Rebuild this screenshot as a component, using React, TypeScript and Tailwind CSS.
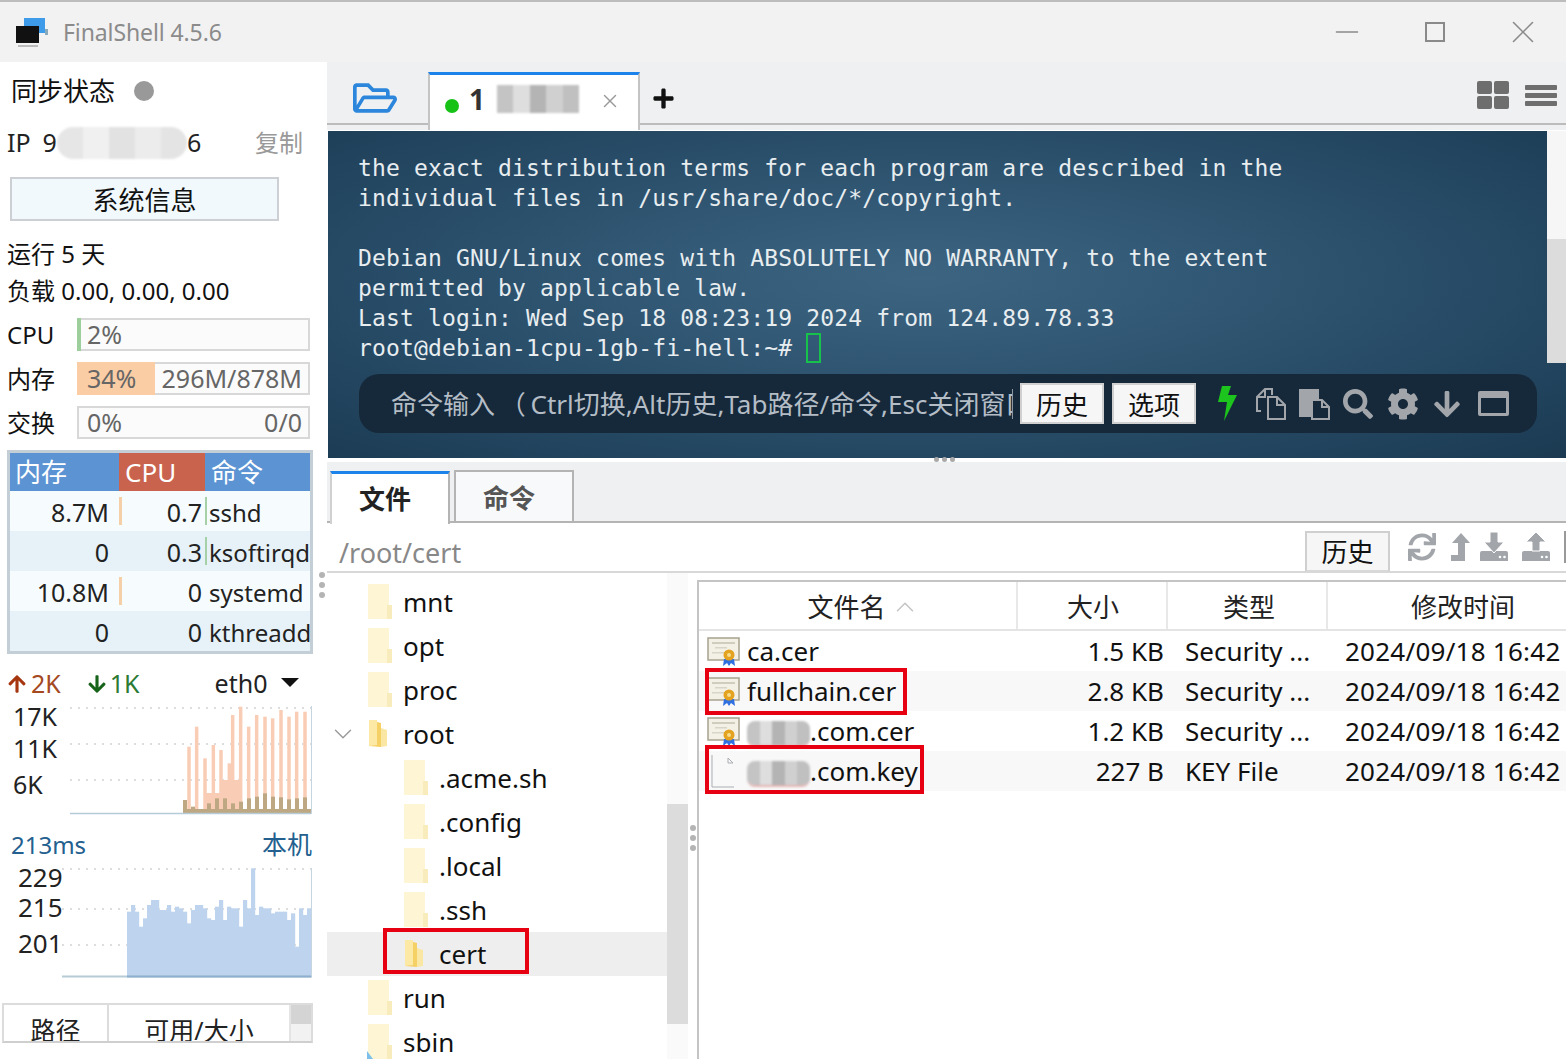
import React from 'react';
import { X, Minus, ChevronUp, ChevronDown } from 'lucide-react';
import { FaArrowDown, FaArrowUp, FaCog, FaPlus, FaRegFolderOpen, FaSearch, FaSync } from 'react-icons/fa';

const sans = { fontFamily: '"Noto Sans", "Noto Sans CJK SC", sans-serif' };

const netUp: [number, number][] = [[567, 260], [590, 200], [615, 295], [640, 255], [663, 270], [688, 310], [698, 165], [722, 140], [746, 200], [770, 165], [795, 170], [818, 175], [843, 150], [867, 170], [890, 155], [915, 155]];
const netDown = [420, 440, 460, 430, 415, 415, 430, 425, 415, 410, 400, 410, 412, 418, 415, 412];
const pingTops = [755, 735, 755, 800, 775, 735, 720, 720, 750, 750, 735, 755, 740, 745, 755, 790, 750, 735, 735, 745, 775, 780, 740, 720, 780, 740, 745, 745, 800, 720, 745, 625, 765, 740, 745, 745, 760, 755, 755, 755, 780, 760, 860, 745, 765, 745];

function Blur({ className, light = false, pink = false }: { className: string; light?: boolean; pink?: boolean }) {
  return (
    <span className={`inline-block overflow-hidden blur-[1px] ${pink ? 'border-b-2 border-[#e6b4b4]' : ''} ${className}`}>
      <span className="flex h-full w-full">
        <span className={`flex-1 ${light ? 'bg-[#e6e6e6]' : 'bg-[#c4c4c4]'}`} />
        <span className={`flex-1 ${light ? 'bg-[#f0f0f0]' : 'bg-[#dedede]'}`} />
        <span className={`flex-1 ${light ? 'bg-[#e2e2e2]' : 'bg-[#b4b4b4]'}`} />
        <span className={`flex-1 ${light ? 'bg-[#ececec]' : 'bg-[#d0d0d0]'}`} />
        <span className={`flex-1 ${light ? 'bg-[#e4e4e4]' : 'bg-[#c0c0c0]'}`} />
      </span>
    </span>
  );
}

function Folder({ open = false, small = false }: { open?: boolean; small?: boolean }) {
  if (open) {
    return (
      <svg width="26" height="32" viewBox="0 0 26 32" className="shrink-0">
        <path d="M2 2 L14 5 L14 29 L2 28 Z" fill="#f5d064" />
        <path d="M14 10 L20 12 L20 28 L14 29 Z" fill="#fbe7a4" />
        <path d="M2 2 L10 2 L10 27 L2 28 Z" fill="#fce9a6" />
      </svg>
    );
  }
  return (
    <svg width="26" height="38" viewBox="0 0 26 38" className="shrink-0">
      <path d="M1 1 H22 V36 H1 Z" fill="#fdf5d3" />
      <path d="M20 22 H25 V36 H20 Z" fill="#f9ecbc" />
      {small && <path d="M0 28 L6 36 L0 36 Z" fill="#7cc0ea" />}
    </svg>
  );
}

function CertIcon() {
  return (
    <svg width="34" height="30" viewBox="0 0 34 30" className="shrink-0">
      <rect x="1" y="2" width="31" height="22" fill="#f3f0e6" stroke="#a8a28e" strokeWidth="1.5" />
      <rect x="5" y="6" width="23" height="2" fill="#d0ccbe" />
      <rect x="8" y="11" width="12" height="1.5" fill="#d8d4c8" />
      <rect x="5" y="16" width="14" height="1.5" fill="#d8d4c8" />
      <path d="M17 23 L16 30 L20 27 L22 30 L24 27 L28 30 L27 23 Z" fill="#2f6fe0" />
      <circle cx="22" cy="19" r="5.5" fill="#e3a21f" />
      <circle cx="22" cy="19" r="2" fill="#f7dc8a" />
    </svg>
  );
}

function FileIcon() {
  return (
    <svg width="34" height="36" viewBox="0 0 34 36" className="shrink-0">
      <path d="M5 2 V34 H27" fill="none" stroke="#a9adb2" strokeWidth="1" />
      <path d="M21 5 L26 10 H21 Z" fill="none" stroke="#a9adb2" strokeWidth="1" />
    </svg>
  );
}

function MeterRow({ label, fill, fillClass, left, right }: { label: string; fill: string; fillClass: string; left: string; right?: string }) {
  return (
    <div className="flex items-center h-[33px] mb-[11px]">
      <span className="w-[70px] text-[24px] text-[#111]">{label}</span>
      <div className="relative flex-1 h-full mr-[17px] bg-[#fbfbfb] border-2 border-[#d8d8d8] text-[#666] text-[25px] leading-[29px]">
        <div className={`absolute -left-[2px] -top-[2px] -bottom-[2px] ${fill} ${fillClass}`} />
        <div className="relative flex justify-between pl-2 pr-1.5">
          <span>{left}</span>
          {right && <span>{right}</span>}
        </div>
      </div>
    </div>
  );
}

function ProcRow({ mem, cpu, cmd, alt, memBar, cpuBar }: { mem: string; cpu: string; cmd: string; alt: boolean; memBar: boolean; cpuBar: boolean }) {
  return (
    <div className={`flex h-10 items-center text-[25px] text-[#222] whitespace-nowrap overflow-hidden ${alt ? 'bg-[#e6f2f8]' : 'bg-[#f6fcfe]'}`}>
      <span className="w-[99px] text-right shrink-0 pt-[4px]">{mem}</span>
      <span className={`w-[3px] h-[28px] ml-[10px] shrink-0 ${memBar ? 'bg-[#f5cfa8]' : ''}`} />
      <span className="w-[80px] text-right shrink-0 pt-[4px]">{cpu}</span>
      <span className={`w-[2px] h-[28px] ml-[3px] shrink-0 ${cpuBar ? 'bg-[#a6d1a6]' : ''}`} />
      <span className="ml-[2px] text-[24px] pt-[4px]">{cmd}</span>
    </div>
  );
}

function Sidebar() {
  return (
    <aside className="relative w-[327px] shrink-0 bg-white h-full overflow-hidden">
      <div className="flex items-center h-[58px] pl-[11px]">
        <span className="text-[26px] text-[#111]">同步状态</span>
        <span className="w-[20px] h-[20px] rounded-full bg-[#999] ml-[19px]" />
      </div>
      <div className="flex items-center h-[46px] pl-[7px] pr-[24px] text-[25px] text-[#222]">
        <span>IP</span>
        <span className="ml-[12px]">9</span>
        <Blur light className="w-[130px] h-[32px] rounded-full" />
        <span>6</span>
        <span className="ml-auto text-[#999] text-[24px]">复制</span>
      </div>
      <div className="mt-[11px] ml-[10px] w-[269px] h-[44px] flex items-center justify-center bg-[#f2f9fd] border-2 border-[#ccd0d4] text-[26px] text-[#111] pt-[2px]">系统信息</div>
      <div className="pl-[7px] mt-[14px] h-[38px] flex items-center text-[24px] text-[#111]">运行 5 天</div>
      <div className="pl-[7px] h-[36px] flex items-center text-[24px] text-[#111] whitespace-nowrap">负载 0.00, 0.00, 0.00</div>
      <div className="pl-[7px] mt-[9px]">
        <MeterRow label="CPU" fill="w-[4px]" fillClass="bg-[#9ccf9c]" left="2%" />
        <MeterRow label="内存" fill="w-[78px]" fillClass="bg-[#fbcda4]" left="34%" right="296M/878M" />
        <MeterRow label="交换" fill="w-0" fillClass="" left="0%" right="0/0" />
      </div>

      <div className="ml-[7px] w-[306px] border-[3px] border-[#c3ced6] h-[204px] overflow-hidden">
        <div className="flex h-[38px] text-[26px] text-white bg-[#5b93d3] leading-[38px]">
          <span className="w-[109px] pl-[5px]">内存</span>
          <span className="w-[86px] pl-[6px] bg-[#c9634e]">CPU</span>
          <span className="pl-[6px]">命令</span>
        </div>
        <ProcRow mem="8.7M" cpu="0.7" cmd="sshd" alt={false} memBar cpuBar />
        <ProcRow mem="0" cpu="0.3" cmd="ksoftirqd" alt memBar={false} cpuBar />
        <ProcRow mem="10.8M" cpu="0" cmd="systemd" alt={false} memBar cpuBar={false} />
        <ProcRow mem="0" cpu="0" cmd="kthreadd" alt memBar={false} cpuBar={false} />
      </div>

      <div className="flex items-center h-[36px] mt-[12px] pl-[7px] text-[25px]">
        <FaArrowUp size={20} className="text-[#a5360f]" />
        <span className="text-[#a5491f] ml-[4px]">2K</span>
        <FaArrowDown size={20} className="text-[#17631a] ml-[26px]" />
        <span className="text-[#2b7a35] ml-[3px]">1K</span>
        <span className="text-[#222] ml-[75px]">eth0</span>
        <span className="ml-[14px] w-0 h-0 border-x-[9px] border-x-transparent border-t-[9px] border-t-[#111] mb-1" />
      </div>
      <div className="flex h-[110px] mt-[3px]">
        <div className="w-[70px] pl-[13px] text-[25px] text-[#222] leading-[32px] -mt-[5px]">
          <div>17K</div>
          <div>11K</div>
          <div className="mt-[4px]">6K</div>
        </div>
        <svg width="243" height="110" viewBox="70 705 243 110">
          <path d="M70 708 H312 M70 744 H312 M70 780 H312" stroke="#bbb" strokeWidth="1" strokeDasharray="2 6" />
          <rect x="205" y="793" width="35" height="20" fill="#f9cdb5" />
          <rect x="221" y="780" width="19" height="33" fill="#f9cdb5" />
          {netUp.map(([zx, t]) => (
            <rect key={zx} x={zx / 3 - 1.75} y={660 + t / 3} width="3.5" height={(460 - t) / 3} fill="#f9cdb5" />
          ))}
          {netDown.map((t, i) => (
            <rect key={i} x={183 + i * 8} y={660 + t / 3} width="4" height={(460 - t) / 3} fill="#bda883" />
          ))}
          <rect x="183" y="809" width="128" height="5" fill="#bda883" />
          <path d="M70 813.5 H311" stroke="#b5cbd6" strokeWidth="1.5" />
          <path d="M311.5 706 V814" stroke="#c5d6e0" strokeWidth="1" />
        </svg>
      </div>

      <div className="flex justify-between items-center h-[36px] mt-[12px] pl-[11px] pr-[15px] text-[#23608f]">
        <span className="text-[24px]">213ms</span>
        <span className="text-[25px]">本机</span>
      </div>
      <div className="flex h-[112px] mt-[4px]">
        <div className="w-[62px] pl-[18px] text-[26px] text-[#222] leading-[30px] -mt-[5px]">
          <div>229</div>
          <div>215</div>
          <div className="mt-[6px]">201</div>
        </div>
        <svg width="252" height="112" viewBox="62 867 252 112">
          <path d="M62 869 H312 M62 909 H312 M62 945 H312" stroke="#bbb" strokeWidth="1" strokeDasharray="2 6" />
          {pingTops.map((t, i) => (
            <rect key={i} x={127 + i * 4} y={660 + t / 3} width="4.2" height={(950 - t) / 3} fill="#bed4ee" />
          ))}
          <path d="M62 976.5 H312" stroke="#b5cbd6" strokeWidth="2" />
          <path d="M127 976.5 H311" stroke="#8eafd0" strokeWidth="2" />
          <path d="M311.5 868 V976" stroke="#c5d6e0" strokeWidth="1" />
        </svg>
      </div>

      <div className="ml-[2px] w-[311px] mt-[24px] h-[40px] border-2 border-[#dcdcdc] border-b-[#cfcfcf] flex text-[25px] text-[#222] overflow-hidden">
        <span className="w-[105px] border-r-2 border-[#dcdcdc] text-center leading-[50px]">路径</span>
        <span className="flex-1 text-center leading-[50px]">可用/大小</span>
        <span className="w-[22px] bg-[#f2f2f2] border-l-2 border-[#e4e4e4]"><span className="block h-[19px] bg-[#d4d4d4]" /></span>
      </div>

      <div className="absolute left-[319px] top-[510px] flex flex-col gap-[4px]">
        <span className="w-[6px] h-[6px] rounded-full bg-[#b4b4b4]" />
        <span className="w-[6px] h-[6px] rounded-full bg-[#b4b4b4]" />
        <span className="w-[6px] h-[6px] rounded-full bg-[#b4b4b4]" />
      </div>
    </aside>
  );
}

function TabBar() {
  return (
    <div className="relative flex items-end h-[68px] bg-[#eef0f2]">
      <div className="absolute left-0 right-0 bottom-[5px] h-[2px] bg-[#bcbcbc]" />
      <div className="w-[101px] h-full flex items-center justify-center relative">
        <FaRegFolderOpen size={44} className="text-[#2b86dc] -ml-[6px] mt-[3px]" />
      </div>
      <div className="relative flex items-center w-[212px] h-[58px] border-t-[3px] border-t-[#1c83ea] border-x-2 border-x-[#c4c4c4] bg-white pl-[15px] pb-[7px] z-10">
        <span className="w-[14px] h-[14px] rounded-full bg-[#17c217] mt-[13px]" />
        <span className="ml-[10px] text-[28px] font-bold text-[#333]">1</span>
        <Blur className="ml-[12px] w-[82px] h-[28px]" />
        <X size={22} strokeWidth={1.6} className="ml-[20px] text-[#999] mt-[4px]" />
      </div>
      <FaPlus size={23} className="relative text-[#111] ml-[12px] mb-[20px]" />
      <div className="relative ml-auto flex items-center gap-[16px] pr-[9px] mb-[21px]">
        <span className="grid grid-cols-2 gap-[2px] w-[32px]">
          <span className="h-[13px] rounded-[2px] bg-[#6e6e6e]" />
          <span className="h-[13px] rounded-[2px] bg-[#6e6e6e]" />
          <span className="h-[13px] rounded-[2px] bg-[#6e6e6e]" />
          <span className="h-[13px] rounded-[2px] bg-[#6e6e6e]" />
        </span>
        <span className="flex flex-col gap-[3px] w-[32px]">
          <span className="h-[5px] rounded-[1px] bg-[#6e6e6e]" />
          <span className="h-[5px] rounded-[1px] bg-[#6e6e6e]" />
          <span className="h-[5px] rounded-[1px] bg-[#6e6e6e]" />
        </span>
      </div>
    </div>
  );
}

function CopyIcon({ filled = false }: { filled?: boolean }) {
  return (
    <svg width="32" height="34" viewBox="0 0 32 34" fill="none" stroke="#a2a6ab" strokeWidth="2" className="block">
      {filled ? (
        <>
          <path d="M1 3 H19 V12 H12 V29 H1 Z" fill="#a2a6ab" />
          <path d="M13 13 H23 L30 20 V32 H13 Z M23 13 V20 H30" fill="#16293a" />
        </>
      ) : (
        <>
          <path d="M6 24 H2 V10 L10 2 H17 V8" />
          <path d="M10 2 V10 H2" />
          <path d="M13 10 H22 L30 18 V32 H13 Z M22 10 V18 H30" />
        </>
      )}
    </svg>
  );
}

function Terminal() {
  return (
    <div className="relative ml-[1px] h-[327px] bg-[radial-gradient(ellipse_at_48%_45%,#3d6582_0%,#2c526e_45%,#1b3a52_100%)] overflow-hidden">
      <pre className="pt-[22px] pl-[30px] text-[23px] leading-[30px] tracking-[0.16px] text-[#e8edf0]" style={{ fontFamily: '"DejaVu Sans Mono", monospace' }}>
        {`the exact distribution terms for each program are described in the
individual files in /usr/share/doc/*/copyright.

Debian GNU/Linux comes with ABSOLUTELY NO WARRANTY, to the extent
permitted by applicable law.
Last login: Wed Sep 18 08:23:19 2024 from 124.89.78.33
root@debian-1cpu-1gb-fi-hell:~# `}
        <span className="inline-block w-[15px] h-[30px] border-2 border-[#17c24a] align-top" />
      </pre>
      <div className="absolute right-0 top-0 w-[19px] h-[232px] bg-[#f6f6f6]">
        <div className="mt-[108px] h-[124px] bg-[#dcdcdc]" />
      </div>
      <div className="absolute left-[31px] top-[243px] w-[1178px] h-[59px] rounded-[20px] bg-[#16293a] flex items-center pl-[32px]">
        <span className="w-[622px] overflow-hidden whitespace-nowrap text-[26px] [word-spacing:-2px] text-[#b4bdc6] border-r border-[#8a97a3] leading-[30px]">命令输入 （ Ctrl切换,Alt历史,Tab路径/命令,Esc关闭窗口</span>
        <span className="ml-[7px] w-[84px] h-[41px] bg-[#f6f6f6] border-2 border-[#d0d0d0] flex items-center justify-center text-[26px] text-[#111] pt-[3px]">历史</span>
        <span className="ml-[8px] w-[84px] h-[41px] bg-[#f6f6f6] border-2 border-[#d0d0d0] flex items-center justify-center text-[26px] text-[#111] pt-[3px]">选项</span>
        <svg width="20" height="36" viewBox="0 0 20 36" className="ml-[22px]">
          <path d="M4 0 H13 L10 9 H19 L6 35 L9 16 H0 Z" fill="#1ec41e" />
        </svg>
        <span className="ml-[17px]"><CopyIcon /></span>
        <span className="ml-[12px]"><CopyIcon filled /></span>
        <FaSearch size={30} className="ml-[12px] text-[#a2a6ab]" />
        <FaCog size={32} className="ml-[14px] text-[#a2a6ab]" />
        <FaArrowDown size={30} className="ml-[13px] text-[#a2a6ab]" />
        <span className="ml-[16px] w-[31px] h-[25px] border-[3px] border-t-[7px] border-[#a2a6ab] rounded-[2px]" />
      </div>
    </div>
  );
}

function DriveIcon({ up = false }: { up?: boolean }) {
  return (
    <svg width="30" height="30" viewBox="0 0 30 30" fill="#a2a6ab" className="block">
      <path d="M1 21 Q1 19 3 19 H27 Q29 19 29 21 V29 H1 Z" />
      <path d={up ? 'M15 0 L25 10 H19 V19 H11 V10 H5 Z' : 'M11 0 H19 V10 H25 L15 21 L5 10 H11 Z'} stroke="#fff" strokeWidth="1" />
      <circle cx="21" cy="25" r="1.3" fill="#fff" />
      <circle cx="25.5" cy="25" r="1.3" fill="#fff" />
    </svg>
  );
}

const treeRows: { name: string; depth: number; open?: boolean; chevron?: boolean; selected?: boolean; link?: boolean }[] = [
  { name: 'mnt', depth: 0 },
  { name: 'opt', depth: 0 },
  { name: 'proc', depth: 0 },
  { name: 'root', depth: 0, open: true, chevron: true },
  { name: '.acme.sh', depth: 1 },
  { name: '.config', depth: 1 },
  { name: '.local', depth: 1 },
  { name: '.ssh', depth: 1 },
  { name: 'cert', depth: 1, open: true, selected: true },
  { name: 'run', depth: 0 },
  { name: 'sbin', depth: 0, link: true },
];

function Tree() {
  return (
    <div className="relative w-[340px] shrink-0 overflow-hidden pt-[7px]">
      {treeRows.map(r => (
        <div key={r.name} className={`relative flex items-center h-11 text-[26px] text-[#111] ${r.selected ? 'bg-[#eeeeee]' : ''} ${r.depth ? 'pl-[76px]' : 'pl-[40px]'}`}>
          {r.chevron && <ChevronDown size={30} strokeWidth={1.1} className="absolute left-[1px] text-[#999]" />}
          <Folder open={r.open} small={r.link} />
          <span className="ml-[10px]">{r.name}</span>
          {r.selected && <div className="absolute left-[56px] top-[-4px] w-[146px] h-[46px] border-[4px] border-[#e60012]" />}
        </div>
      ))}
    </div>
  );
}

const fileRows = [
  { name: 'ca.cer', size: '1.5 KB', type: 'Security ...', cert: true },
  { name: 'fullchain.cer', size: '2.8 KB', type: 'Security ...', cert: true, boxW: 'w-[202px]', boxH: 'h-[47px]', boxT: 'top-[-3px]' },
  { name: '.com.cer', size: '1.2 KB', type: 'Security ...', cert: true, blur: true },
  { name: '.com.key', size: '227 B', type: 'KEY File', cert: false, blur: true, boxW: 'w-[219px]', boxH: 'h-[49px]', boxT: 'top-[-6px]' },
];

function FileTable() {
  return (
    <div className="flex-1 border-l-2 border-t-2 border-[#c4c4c4] mt-[7px] overflow-hidden">
      <div className="flex h-[49px] border-b-2 border-[#e4e4e4] text-[26px] text-[#222]">
        <span className="w-[319px] border-r-2 border-[#e8e8e8] flex items-center justify-center gap-[4px] pl-[12px] pt-[3px]">文件名<ChevronUp size={30} strokeWidth={1.2} className="text-[#c4c4c4]" /></span>
        <span className="w-[150px] border-r-2 border-[#e8e8e8] flex items-center justify-center pl-[2px] pt-[3px]">大小</span>
        <span className="w-[160px] border-r-2 border-[#e8e8e8] flex items-center justify-center pl-[4px] pt-[3px]">类型</span>
        <span className="flex-1 flex items-center justify-center pl-[32px] pt-[3px]">修改时间</span>
      </div>
      {fileRows.map((f, i) => (
        <div key={f.name} className={`relative flex items-center h-10 text-[26px] text-[#111] whitespace-nowrap ${i % 2 ? 'bg-[#f8f8f8]' : ''}`}>
          <span className="w-[319px] flex items-center pl-[8px]">
            {f.cert ? <CertIcon /> : <FileIcon />}
            <span className="ml-[6px] flex items-center">
              {f.blur && <Blur pink className="w-[63px] h-[26px] rounded-[8px] mt-[6px]" />}
              {f.name}
            </span>
          </span>
          <span className="w-[150px] text-right pr-[4px]">{f.size}</span>
          <span className="w-[160px] pl-[17px]">{f.type}</span>
          <span className="pl-[17px] tracking-[0.25px]">2024/09/18 16:42</span>
          {f.boxW && <div className={`absolute left-[6px] border-[4px] border-[#e60012] ${f.boxW} ${f.boxH} ${f.boxT}`} />}
        </div>
      ))}
    </div>
  );
}

function UpArrowIcon() {
  return (
    <svg width="22" height="30" viewBox="0 0 22 30" fill="#a2a6ab" className="block">
      <path d="M12 1 L21 11 H16 V29 H2 V23 H9 V11 H3 Z" />
    </svg>
  );
}

function FilePanel() {
  return (
    <div className="flex-1 min-h-0 flex flex-col bg-white">
      <div className="relative flex items-end h-[61px] bg-[#eef0f2] pl-[3px] text-[26px] font-bold">
        <div className="absolute left-0 right-0 bottom-0 h-[2px] bg-[#b4b4b4]" />
        <span className="relative w-[120px] h-[53px] border-t-[3px] border-t-[#1c83ea] border-r-2 border-r-[#b4b4b4] border-l-2 border-l-[#d0d0d0] bg-white flex items-center justify-center text-[#222] -mb-[1px] pr-[10px]">文件</span>
        <span className="relative ml-[4px] w-[120px] h-[53px] border-2 border-[#b4b4b4] bg-[#f8f9fa] flex items-center justify-center text-[#555] pr-[10px] pt-[3px]">命令</span>
      </div>
      <div className="flex items-center h-[50px] border-b-2 border-[#d8d8d8] pl-[12px] text-[26px]">
        <span className="text-[#888] text-[27px] pt-[12px]">/root/cert</span>
        <span className="ml-auto w-[85px] h-[41px] border-2 border-[#cfcfcf] border-b-[#d8d8d8] bg-[#f6f6f6] flex items-center justify-center text-[#111] mt-[8px] pt-[3px]">历史</span>
        <FaSync size={28} className="ml-[18px] text-[#a2a6ab]" />
        <span className="ml-[13px]"><UpArrowIcon /></span>
        <span className="ml-[8px]"><DriveIcon /></span>
        <span className="ml-[12px]"><DriveIcon up /></span>
        <span className="ml-[13px] w-[2px] h-[32px] bg-[#999]" />
      </div>
      <div className="flex-1 min-h-0 flex overflow-hidden">
        <Tree />
        <div className="w-[21px] shrink-0 bg-[#fafafa] relative pt-[231px]">
          <div className="h-[220px] bg-[#dcdcdc]" />
        </div>
        <div className="w-[9px] shrink-0 flex flex-col items-center gap-[4px] pt-[252px]">
          <span className="w-[6px] h-[6px] rounded-full bg-[#b4b4b4]" />
          <span className="w-[6px] h-[6px] rounded-full bg-[#b4b4b4]" />
          <span className="w-[6px] h-[6px] rounded-full bg-[#b4b4b4]" />
        </div>
        <FileTable />
      </div>
    </div>
  );
}

export default function App() {
  return (
    <div className="w-[1566px] h-[1059px] overflow-hidden flex flex-col bg-white" style={sans}>
      <header className="h-[62px] shrink-0 flex items-center bg-[#f2f2f2] border-t-2 border-[#bdbdbd]">
        <svg width="36" height="32" viewBox="0 0 36 32" className="ml-[15px] mt-[2px]">
          <rect x="9" y="1" width="21" height="15" fill="#3d9be9" />
          <rect x="1" y="9" width="23" height="17" fill="#111" />
          <rect x="3" y="28" width="20" height="2" fill="#bbb" />
          <rect x="30" y="12" width="3" height="6" fill="#8ab" />
        </svg>
        <span className="ml-[12px] text-[23px] tracking-[-0.1px] text-[#8b8b8b]">FinalShell 4.5.6</span>
        <div className="ml-auto flex items-center">
          <Minus size={36} strokeWidth={1.1} className="text-[#8a8a8a] mr-[60px]" />
          <span className="w-[20px] h-[20px] border-2 border-[#8a8a8a] mr-[59px]" />
          <X size={38} strokeWidth={1} className="text-[#8a8a8a] mr-[24px]" />
        </div>
      </header>
      <div className="flex-1 min-h-0 flex">
        <Sidebar />
        <main className="flex-1 min-w-0 flex flex-col">
          <TabBar />
          <div className="h-[1px] bg-white" />
          <Terminal />
          <div className="h-[4px] bg-white relative">
            <div className="absolute left-[607px] -top-[1px] flex gap-[3px]">
              <span className="w-[5px] h-[5px] rounded-full bg-[#aaa]" />
              <span className="w-[5px] h-[5px] rounded-full bg-[#aaa]" />
              <span className="w-[5px] h-[5px] rounded-full bg-[#aaa]" />
            </div>
          </div>
          <FilePanel />
        </main>
      </div>
    </div>
  );
}
